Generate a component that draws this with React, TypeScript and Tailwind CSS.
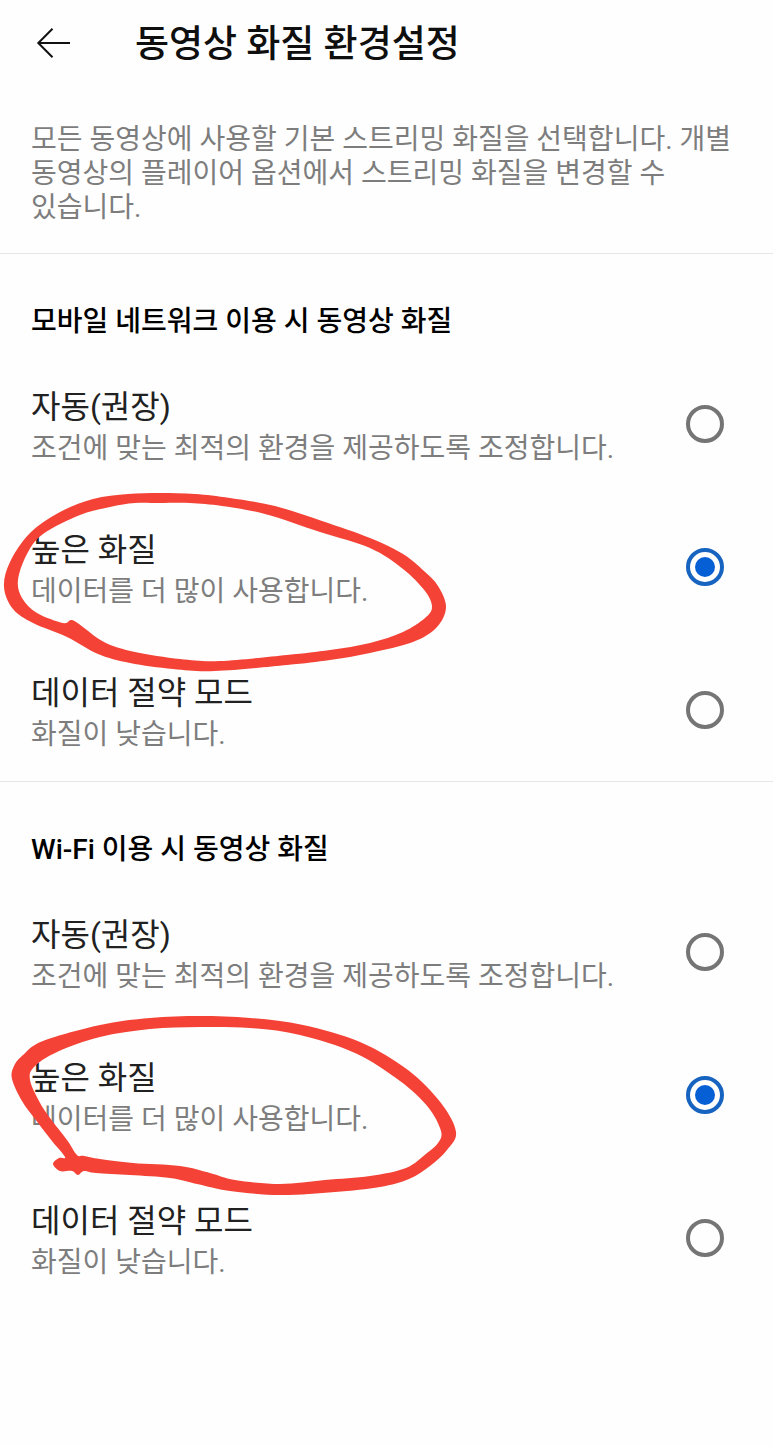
import { useState } from "react";

type Point = [number, number];

interface Option {
  value: string;
  title: string;
  description: string;
}

interface Mark {
  viewBox: string;
  outer: Point[];
  inner: Point[];
}

interface QualitySectionProps {
  name: string;
  heading: string;
  mark: Mark;
}

const options: Option[] = [
  { value: "auto", title: "자동(권장)", description: "조건에 맞는 최적의 환경을 제공하도록 조정합니다." },
  { value: "high", title: "높은 화질", description: "데이터를 더 많이 사용합니다." },
  { value: "saver", title: "데이터 절약 모드", description: "화질이 낮습니다." },
];

// Pen outlines: the stroke is the area between the outer and inner loops.
const mobileMark: Mark = {
  viewBox: "0 495 480 143",
  outer: [
    [160, 493], [195, 494], [230, 498], [275, 506], [322, 521], [370, 538], [403, 554], [424, 571], [438, 586],
    [446, 607], [437, 627], [413, 642], [370, 653], [330, 660], [287, 665], [215, 671], [173, 669], [130, 663],
    [98, 654], [67, 637], [33, 623], [13, 609], [4, 587], [10, 562], [30, 533], [60, 512], [93, 499], [128, 494],
  ],
  inner: [
    [160, 503], [190, 503], [222, 506], [265, 514], [320, 532], [370, 548], [403, 569], [425, 591],
    [432, 607], [425, 618], [403, 632], [370, 643], [330, 650], [287, 655], [220, 661], [180, 659], [135, 652],
    [104, 642], [79, 624], [71, 620], [63, 623], [37, 613], [22, 598], [18, 580], [27, 554], [43, 534],
    [80, 515], [110, 507], [135, 503],
  ],
};

const wifiMark: Mark = {
  viewBox: "0 1023 480 143",
  outer: [
    [200, 1016], [250, 1018], [303, 1025], [360, 1042], [408, 1070], [441, 1103], [456, 1132], [447, 1150],
    [430, 1166], [409, 1179], [380, 1187], [335, 1192], [280, 1195], [230, 1191], [197, 1184], [170, 1178], [130, 1175],
    [96, 1173], [84, 1171], [78, 1175], [72, 1171], [60, 1171], [53, 1164], [59, 1158], [65, 1157], [52, 1141], [35, 1119],
    [22, 1101], [12, 1079], [14, 1066], [23, 1055], [43, 1041], [100, 1025], [150, 1018],
  ],
  inner: [
    [200, 1027], [250, 1028], [300, 1035], [355, 1053], [400, 1081], [428, 1107], [441, 1131], [438, 1143],
    [427, 1153], [406, 1168], [370, 1176], [325, 1180], [280, 1184], [235, 1180], [210, 1173], [180, 1166], [133, 1163],
    [100, 1159], [84, 1156], [77, 1155], [67, 1140], [50, 1118], [39, 1101], [30, 1080], [34, 1067], [57, 1052], [100, 1037], [150, 1029],
  ],
};

function smoothLoop(points: Point[]) {
  const n = points.length;
  let d = `M${points[0][0]} ${points[0][1]}`;
  for (let i = 0; i < n; i++) {
    const a = points[(i + n - 1) % n];
    const b = points[i];
    const c = points[(i + 1) % n];
    const e = points[(i + 2) % n];
    d += `C${b[0] + (c[0] - a[0]) / 6} ${b[1] + (c[1] - a[1]) / 6} ${c[0] - (e[0] - b[0]) / 6} ${c[1] - (e[1] - b[1]) / 6} ${c[0]} ${c[1]}`;
  }
  return d + "Z";
}

function PenMark({ mark }: { mark: Mark }) {
  return (
    <svg
      className="absolute left-0 top-0 z-10 w-[480px] h-[143px] overflow-visible pointer-events-none"
      viewBox={mark.viewBox}
      aria-hidden="true"
    >
      <path d={smoothLoop(mark.outer) + smoothLoop(mark.inner)} fill="#f44236" fillRule="evenodd" />
    </svg>
  );
}

function QualitySection({ name, heading, mark }: QualitySectionProps) {
  const [selected, setSelected] = useState("high");

  return (
    <section className="border-t border-[#e6e6e6]">
      <h2 className="px-[31px] pt-12 pb-[10px] text-[28px] leading-10 font-medium text-black">{heading}</h2>
      {options.map((option) => (
        <div key={option.value} className="relative">
          <label className="flex items-center justify-between h-[143px] pl-[31px] pr-[49px] cursor-pointer">
            <span className="flex flex-col pt-[7px]">
              <span className="text-[32px] leading-[44px] text-[#212121]">{option.title}</span>
              <span className="text-[28px] leading-10 text-[#7d7d7d]">{option.description}</span>
            </span>
            <input
              type="radio"
              name={name}
              value={option.value}
              checked={selected === option.value}
              onChange={() => setSelected(option.value)}
              className="appearance-none shrink-0 grid place-content-center size-[38px] rounded-full border-4 border-[#757575] checked:border-[#1663c0] checked:before:block checked:before:size-5 checked:before:rounded-full checked:before:bg-[#065fd4]"
            />
          </label>
          {option.value === "high" && <PenMark mark={mark} />}
        </div>
      ))}
    </section>
  );
}

export default function App() {
  return (
    <main className="min-h-screen bg-[#fefefe] break-keep font-[Roboto,'Noto_Sans_CJK_KR',sans-serif]">
      <header className="flex items-center h-[86px] pl-9">
        <button type="button" aria-label="뒤로" className="text-[#111111]">
          <svg className="w-[34px] h-[30px]" viewBox="0 0 34 30" fill="none" stroke="currentColor" strokeWidth="2">
            <path d="M16.5 .8 2.3 15 16.5 29.2M2.3 15H34" />
          </svg>
        </button>
        <h1 className="ml-[65px] pt-1 text-[37px] leading-[52px] font-medium text-[#0f0f0f]">동영상 화질 환경설정</h1>
      </header>
      <p className="px-[31px] pt-[37px] pb-7 text-[28px] leading-[34px] text-[#7d7d7d]">
        모든 동영상에 사용할 기본 스트리밍 화질을 선택합니다. 개별 동영상의 플레이어 옵션에서 스트리밍 화질을 변경할 수 있습니다.
      </p>
      <QualitySection name="mobile-quality" heading="모바일 네트워크 이용 시 동영상 화질" mark={mobileMark} />
      <QualitySection name="wifi-quality" heading="Wi-Fi 이용 시 동영상 화질" mark={wifiMark} />
    </main>
  );
}
